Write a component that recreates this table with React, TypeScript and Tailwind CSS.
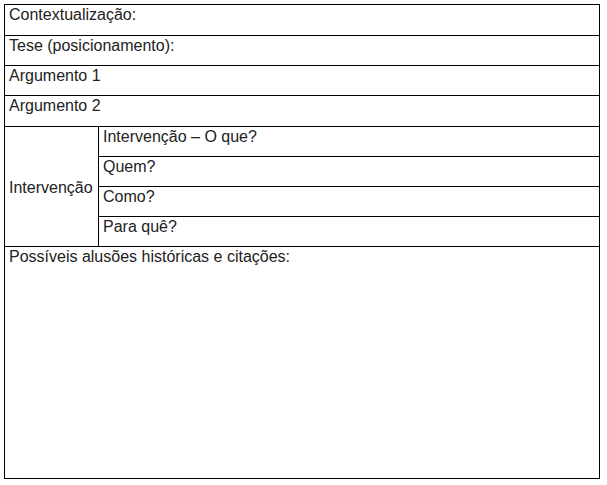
import React from "react";

const Cell = ({ h, children, last }: { h: string; children?: React.ReactNode; last?: boolean }) => (
  <div className={`${h} ${last ? "" : "border-b border-black"} pl-[4px] pt-[1px] leading-[18px] box-border whitespace-nowrap`}>{children}</div>
);

export default function App() {
  return (
    <div className="bg-white w-[607px] h-[485px] pl-[4px] pt-[4px]">
      <div
        className="w-[596px] h-[475px] border border-black flex flex-col text-[16px] text-[#222] box-border"
        style={{ fontFamily: '"Liberation Sans", Arial, sans-serif' }}
      >
        <Cell h="h-[31px]">Contextualização:</Cell>
        <Cell h="h-[30px]">Tese (posicionamento):</Cell>
        <Cell h="h-[30px]">Argumento 1</Cell>
        <Cell h="h-[31px]">Argumento 2</Cell>
        <div className="h-[120px] border-b border-black flex box-border">
          <div className="w-[94px] border-r border-black flex items-center pl-[4px] pt-[2px] leading-[18px] box-border">Intervenção</div>
          <div className="flex-1 flex flex-col">
            <Cell h="h-[30px]">Intervenção – O que?</Cell>
            <Cell h="h-[30px]">Quem?</Cell>
            <Cell h="h-[30px]">Como?</Cell>
            <Cell h="h-[29px]" last>Para quê?</Cell>
          </div>
        </div>
        <div className="flex-1 pl-[4px] pt-[1px] leading-[18px]">Possíveis alusões históricas e citações:</div>
      </div>
    </div>
  );
}
